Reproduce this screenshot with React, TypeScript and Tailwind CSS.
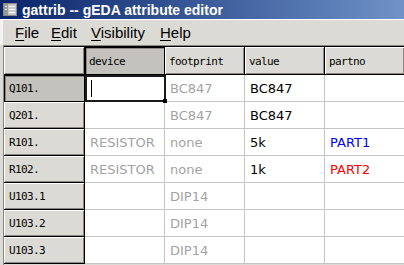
import React from "react";

type Cell = { text: string; color?: string };

interface Row {
  name: string;
  cells: Cell[];
}

const GRAY = "text-[#a3a3a3]";

const columns = ["device", "footprint", "value", "partno"];

const rows: Row[] = [
  {
    name: "Q101.",
    cells: [{ text: "" }, { text: "BC847", color: GRAY }, { text: "BC847", color: "text-black" }, { text: "" }],
  },
  {
    name: "Q201.",
    cells: [{ text: "" }, { text: "BC847", color: GRAY }, { text: "BC847", color: "text-black" }, { text: "" }],
  },
  {
    name: "R101.",
    cells: [
      { text: "RESISTOR", color: GRAY },
      { text: "none", color: GRAY },
      { text: "5k", color: "text-black" },
      { text: "PART1", color: "text-[#0000ff]" },
    ],
  },
  {
    name: "R102.",
    cells: [
      { text: "RESISTOR", color: GRAY },
      { text: "none", color: GRAY },
      { text: "1k", color: "text-black" },
      { text: "PART2", color: "text-[#ff0000]" },
    ],
  },
  { name: "U103.1", cells: [{ text: "" }, { text: "DIP14", color: GRAY }, { text: "" }, { text: "" }] },
  { name: "U103.2", cells: [{ text: "" }, { text: "DIP14", color: GRAY }, { text: "" }, { text: "" }] },
  { name: "U103.3", cells: [{ text: "" }, { text: "DIP14", color: GRAY }, { text: "" }, { text: "" }] },
];

const mono = "font-['DejaVu_Sans_Mono',monospace] text-[11px] tracking-[-0.6px] text-black pt-[3px]";
const sans = "font-['DejaVu_Sans',sans-serif] text-[13px] pt-[2px]";

function WindowIcon() {
  return (
    <svg width="14" height="13" viewBox="0 0 14 13">
      <rect x="0.5" y="0.5" width="13" height="12" fill="#c8c8c8" stroke="#8a8a8a" />
      <rect x="1" y="1" width="4" height="11" fill="#9a9a9a" />
      <rect x="6" y="3" width="6" height="1" fill="#ffffff" />
      <rect x="6" y="6" width="6" height="1" fill="#ffffff" />
      <rect x="6" y="9" width="6" height="1" fill="#ffffff" />
      <rect x="2" y="3" width="2" height="1" fill="#e0e0e0" />
      <rect x="2" y="6" width="2" height="1" fill="#e0e0e0" />
    </svg>
  );
}

function MenuItem({ first, rest, width }: { first: string; rest: string; width: string }) {
  return (
    <span className={`${width} shrink-0`}>
      <span className="underline underline-offset-[2px] decoration-1">{first}</span>
      {rest}
    </span>
  );
}

export default function App() {
  return (
    <div className="w-[404px] h-[265px] overflow-hidden bg-[#dcdad5] flex flex-col">
      {/* title bar */}
      <div className="h-[19px] shrink-0 flex items-center gap-[5px] pl-[3px] bg-gradient-to-r from-[#0a246a] to-[#7092c8]">
        <WindowIcon />
        <span className="font-['Liberation_Sans',sans-serif] font-bold text-[14px] text-white leading-none">
          gattrib -- gEDA attribute editor
        </span>
      </div>

      {/* menu bar */}
      <div className="h-[26px] shrink-0 flex items-center pl-[12px] pt-[1px] border-t border-white border-l-[3px] border-l-[#f4f3f1] font-['Liberation_Sans',sans-serif] text-[15px] text-black">
        <MenuItem first="F" rest="ile" width="w-[36px]" />
        <MenuItem first="E" rest="dit" width="w-[40px]" />
        <MenuItem first="V" rest="isibility" width="w-[69px]" />
        <MenuItem first="H" rest="elp" width="w-[40px]" />
      </div>

      {/* sheet */}
      <div className="flex-1 pl-[3px]">
        <div className="h-full border-t border-[#8a8782] border-l border-l-[#8a8782]">
          <div className="h-full border-t border-black grid grid-cols-[81px_80px_80px_80px_80px] grid-rows-[28px_repeat(7,27px)]">
            {/* corner */}
            <div className="bg-[#dcdad5] border-r border-b border-black shadow-[inset_1px_1px_0_#ffffff,inset_-1px_-1px_0_#8a8782]" />
            {columns.map((c, i) => (
              <div
                key={c}
                className={
                  i === 0
                    ? `flex items-center pl-[4px] bg-[#c4c2bd] border-r border-b border-black shadow-[inset_1px_1px_0_#000000,inset_2px_2px_0_#8a8782] ${mono}`
                    : `flex items-center pl-[4px] bg-[#dcdad5] border-r border-b border-black shadow-[inset_1px_1px_0_#ffffff,inset_-1px_-1px_0_#8a8782] ${mono}`
                }
              >
                {c}
              </div>
            ))}

            {rows.map((r, ri) => (
              <React.Fragment key={r.name}>
                <div
                  className={
                    ri === 0
                      ? `flex items-center pl-[5px] bg-[#c4c2bd] border-r border-b border-black shadow-[inset_1px_1px_0_#000000,inset_2px_2px_0_#8a8782] ${mono}`
                      : `flex items-center pl-[5px] bg-[#dcdad5] border-r border-b border-black shadow-[inset_1px_1px_0_#ffffff,inset_-1px_-1px_0_#8a8782] ${mono}`
                  }
                >
                  {r.name}
                </div>
                {r.cells.map((c, ci) =>
                  ri === 0 && ci === 0 ? (
                    <div key={ci} className="relative bg-white border-2 border-[#1a1a1a] -mr-[1px]">
                      <div className="absolute left-[4px] top-[3px] w-[1px] h-[17px] bg-black" />
                      <div className="absolute -right-[3px] -bottom-[3px] w-[4px] h-[4px] bg-black" />
                    </div>
                  ) : (
                    <div
                      key={ci}
                      className={`flex items-center pl-[5px] bg-white border-r border-b border-[#c6c6c6] whitespace-nowrap overflow-hidden ${sans} ${c.color ?? ""}`}
                    >
                      {c.text}
                    </div>
                  )
                )}
              </React.Fragment>
            ))}
          </div>
        </div>
      </div>
    </div>
  );
}
